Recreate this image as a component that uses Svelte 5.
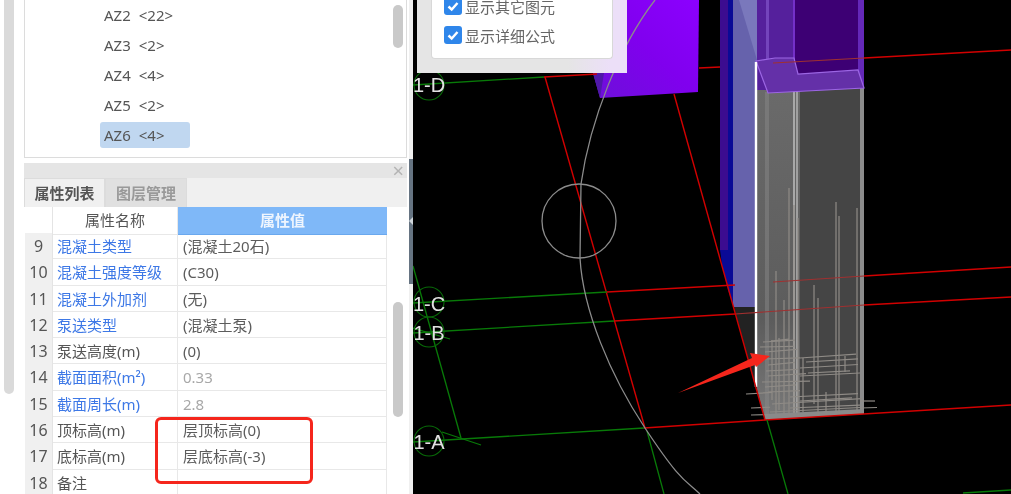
<script lang="ts">
  const members = [
    { name: 'AZ2', count: 22 },
    { name: 'AZ3', count: 2 },
    { name: 'AZ4', count: 4 },
    { name: 'AZ5', count: 2 },
    { name: 'AZ6', count: 4, selected: true }
  ];

  const props = [
    { no: 9, name: '混凝土类型', value: '(混凝土20石)', link: true },
    { no: 10, name: '混凝土强度等级', value: '(C30)', link: true },
    { no: 11, name: '混凝土外加剂', value: '(无)', link: true },
    { no: 12, name: '泵送类型', value: '(混凝土泵)', link: true },
    { no: 13, name: '泵送高度(m)', value: '(0)' },
    { no: 14, name: '截面面积(m²)', value: '0.33', link: true, muted: true },
    { no: 15, name: '截面周长(m)', value: '2.8', link: true, muted: true },
    { no: 16, name: '顶标高(m)', value: '层顶标高(0)' },
    { no: 17, name: '底标高(m)', value: '层底标高(-3)' },
    { no: 18, name: '备注', value: '' }
  ];

  // axis bubbles on the drawing
  const axes = [
    { label: '1-D', cy: 85, base: 92 },
    { label: '1-C', cy: 302, base: 311 },
    { label: '1-B', cy: 332, base: 340 },
    { label: '1-A', cy: 441, base: 449 }
  ];

  const greens = [
    [413, 85, 544, 77],
    [413, 303, 607, 292],
    [413, 333, 614, 321],
    [413, 442, 644, 428],
    [413, 266, 461, 438],
    [442, 432, 481, 445],
    [413, 328, 450, 339],
    [767, 420, 788, 494],
    [647, 431, 664, 494],
    [963, 493, 1011, 490]
  ];

  const reds = [
    [544, 77, 597, 74],
    [699, 68, 720, 67],
    [864, 58, 1011, 50],
    [607, 292, 735, 285],
    [864, 276, 1011, 267],
    [614, 321, 735, 314],
    [864, 305, 1011, 297],
    [644, 428, 765, 420],
    [765, 420, 1011, 405],
    [545, 77, 645, 428],
    [674, 94, 765, 420]
  ];

  const dimReds = [
    [773, 63, 864, 58],
    [773, 282, 864, 276],
    [735, 314, 864, 305]
  ];

  // vertical bars: x, top, bottom
  const bars = [
    [776, 271, 414], [784, 300, 414], [789, 188, 416], [794, 205, 416], [798, 218, 416],
    [814, 285, 404], [818, 298, 416], [836, 202, 416], [839, 216, 416], [857, 208, 414],
    [772, 340, 400], [779, 338, 410], [803, 358, 412], [826, 392, 416], [845, 356, 372]
  ];

  // stirrups and stubs: x1, y, x2, tilt
  const ties = [
    [763, 342, 795, 0.06], [760, 347, 794, 0.02], [771, 341, 789, 0.1], [765, 352, 797, 0.08],
    [764, 359, 800, 0.03], [768, 365, 795, 0.1], [766, 371, 798, 0.05], [768, 376, 806, 0.06],
    [762, 382, 810, 0.02], [765, 387, 796, 0.07], [768, 392, 800, 0.04],
    [800, 358, 856, 0.07], [806, 362, 858, 0.06], [800, 368, 858, 0.06], [808, 373, 850, 0.05],
    [800, 376, 860, 0.05], [790, 397, 858, 0.05], [800, 401, 852, 0.06], [772, 404, 862, 0.06],
    [790, 408, 860, 0.04], [770, 412, 860, 0.05], [746, 394, 772, 0.06], [751, 408, 770, 0.04],
    [751, 415, 768, 0.02], [860, 401, 875, 0], [860, 408, 877, 0.03]
  ];
</script>

<div class="page">
  <aside class="sidebar">
    <div class="gutter"><div class="gutter-thumb"></div></div>

    <div class="panels">
      <section class="list-panel">
        <ul class="members">
          {#each members as m}
            <li class:selected={m.selected}><span>{m.name}</span><span>&lt;{m.count}&gt;</span></li>
          {/each}
        </ul>
        <div class="list-thumb"></div>
      </section>

      <section class="props-panel">
        <header class="props-title"><span class="close">×</span></header>
        <div class="tabs">
          <div class="tab active">属性列表</div>
          <div class="tab">图层管理</div>
        </div>
        <div class="props-body">
          <div class="table">
            <div class="row head">
              <div class="no"></div>
              <div class="name">属性名称</div>
              <div class="value">属性值</div>
            </div>
            {#each props as p}
              <div class="row">
                <div class="no">{p.no}</div>
                <div class="name" class:link={p.link}>{p.name}</div>
                <div class="value" class:muted={p.muted}>{p.value}</div>
              </div>
            {/each}
          </div>
          <div class="table-thumb"></div>
        </div>
      </section>
    </div>

    <div class="splitter">
      <div class="grip"><span class="grip-arrow"></span></div>
    </div>

    <div class="callout"></div>
  </aside>

  <main class="canvas">
    <svg class="drawing" viewBox="413 0 598 494" width="598" height="494">
      <defs>
        <linearGradient id="block" x1="0" y1="1" x2="1" y2="0">
          <stop offset="0" stop-color="#6c10d8" />
          <stop offset="0.5" stop-color="#8000ee" />
          <stop offset="1" stop-color="#8c00ff" />
        </linearGradient>
        <linearGradient id="shaft" x1="0" y1="0" x2="0" y2="1">
          <stop offset="0" stop-color="#6a6a6a" />
          <stop offset="0.7" stop-color="#5c5c5c" />
          <stop offset="1" stop-color="#7a7a7a" />
        </linearGradient>
      </defs>

      <!-- purple block behind the panel -->
      <polygon points="593,73 600,98 698,92 699,0 600,0" fill="url(#block)" />
      <polygon points="593,73 600,98 604,73" fill="#4f18a8" />

      <!-- tall wall -->
      <rect x="720" y="0" width="8" height="250" fill="#3c0c90" />
      <polygon points="728,0 733,0 733,305 728,290 722,265 720,250 728,250" fill="#0a0a96" />
      <polygon points="733,0 757,0 757,307 733,307" fill="#6662ac" />
      <polygon points="739,0 757,0 757,60" fill="#7a78bc" />
      <polygon points="734,307 757,307 757,390 756,390" fill="#222" />

      <!-- upper column -->
      <rect x="757" y="0" width="38" height="92" fill="#55209c" />
      <rect x="795" y="0" width="69" height="90" fill="#3d0074" />
      <rect x="766" y="0" width="3" height="92" fill="#7444bc" />
      <rect x="793" y="0" width="2" height="90" fill="#7430c8" />
      <rect x="858" y="0" width="6" height="88" fill="#6428b8" />

      <!-- lower column -->
      <polygon points="757,90 800,90 800,416 765,420 757,390" fill="url(#shaft)" />
      <polygon points="800,90 864,88 864,414 800,417" fill="#454545" />
      <rect x="765" y="92" width="4" height="328" fill="#888" opacity="0.5" />
      <rect x="793" y="90" width="2" height="326" fill="#a8a8a8" />
      <rect x="796" y="90" width="2" height="326" fill="#a0a0a0" />
      <rect x="860" y="88" width="4" height="326" fill="#8c8c8c" />
      <polygon points="765,420 864,414 864,409 765,414" fill="#8a8a8a" />

      <!-- cap of the column -->
      <polygon
        points="756,61 775,58 794,58 798,74 858,70 864,88 768,93"
        fill="#6430a8"
        stroke="#9c66e4"
        stroke-width="1.2"
      />

      <line x1="756" y1="62" x2="756" y2="387" stroke="#fff" stroke-width="2.4" />

      {#each bars as [x, top, bottom]}
        <line x1={x} y1={top} x2={x} y2={bottom} class="rebar" />
      {/each}
      {#each ties as [x1, y, x2, tilt]}
        <line {x1} y1={y} {x2} y2={y - (x2 - x1) * tilt} class="rebar" />
      {/each}

      {#each dimReds as [x1, y1, x2, y2]}
        <line {x1} {y1} {x2} {y2} class="red dim" />
      {/each}
      {#each reds as [x1, y1, x2, y2]}
        <line {x1} {y1} {x2} {y2} class="red" />
      {/each}
      {#each greens as [x1, y1, x2, y2]}
        <line {x1} {y1} {x2} {y2} class="green" />
      {/each}

      <!-- big arc and small circle -->
      <path class="arc" d="M655 0C620 45 590 120 581 184L580 258C583 310 610 375 645 428S685 480 700 494" />
      <circle class="arc" cx="579" cy="221" r="37" />

      {#each axes as a}
        <circle class="bubble" cx="429" cy={a.cy} r="15" />
        <text class="axis" x="429" y={a.base}>{a.label}</text>
      {/each}

      <!-- red arrow -->
      <polygon points="678,393 752,358 750,353 770,356 756,367 755,365" fill="#f5261c" />
    </svg>

    <div class="options">
      <div class="options-card">
        <label class="check">
          <span class="box"><svg viewBox="0 0 18 18" width="18" height="18"><path d="M4.5 9.5l3.2 3 5.8-6.5" /></svg></span>
          显示其它图元
        </label>
        <label class="check">
          <span class="box"><svg viewBox="0 0 18 18" width="18" height="18"><path d="M4.5 9.5l3.2 3 5.8-6.5" /></svg></span>
          显示详细公式
        </label>
      </div>
    </div>
  </main>
</div>

<style>
  :global(body) {
    margin: 0;
    background: #000;
  }

  .page {
    display: flex;
    width: 1011px;
    height: 494px;
    overflow: hidden;
    font-family: 'Noto Sans', 'Noto Sans CJK SC', sans-serif;
    font-size: 15px;
    filter: blur(0.35px);
  }

  .sidebar {
    position: relative;
    display: flex;
    flex: 0 0 413px;
    background: #fff;
  }

  .gutter {
    flex: 0 0 10px;
    margin: 0 10px 0 4px;
  }

  .gutter-thumb {
    height: 394px;
    background: #dadada;
    border-radius: 0 0 5px 5px;
  }

  .panels {
    flex: 0 0 383px;
    display: flex;
    flex-direction: column;
    gap: 5px;
    min-height: 0;
  }

  .splitter {
    margin-left: 2px;
    flex: 0 0 4px;
    padding-top: 159px;
    background: #f0f0f0;
  }

  .grip {
    position: relative;
    height: 125px;
    background: #667482;
  }

  .grip-arrow {
    position: absolute;
    top: 58px;
    left: 0;
    border: 4px solid transparent;
    border-left: 0;
    border-right: 4px solid #cfd5da;
  }

  /* member list */
  .list-panel {
    position: relative;
    flex: 0 0 158px;
    box-sizing: border-box;
    background: #fff;
    border: 1px solid #dcdcdc;
    border-top: 0;
  }

  .members {
    list-style: none;
    margin: 0;
    padding: 0 0 0 75px;
    color: #555;
  }

  .members li {
    display: flex;
    align-items: center;
    gap: 8px;
    box-sizing: border-box;
    width: 90px;
    height: 30px;
    padding-left: 4px;
  }

  .members li.selected {
    height: 26px;
    margin-top: 2px;
    background: #c0d7f0;
    border-radius: 3px;
  }

  .list-thumb {
    position: absolute;
    top: 5px;
    right: 3px;
    width: 10px;
    height: 43px;
    background: #c9c9c9;
    border-radius: 5px;
  }

  /* property grid */
  .props-panel {
    flex: 1;
    min-height: 0;
    display: flex;
    flex-direction: column;
  }

  .props-title {
    display: flex;
    align-items: center;
    justify-content: flex-end;
    flex: 0 0 15px;
    padding-right: 3px;
    background: #e5e5e5;
  }

  .close {
    font-size: 20px;
    line-height: 15px;
    color: #b4b4b4;
  }

  .tabs {
    display: flex;
    flex: 0 0 29px;
    background: #f0f0f0;
  }

  .tab {
    box-sizing: border-box;
    width: 82px;
    padding-top: 3px;
    text-align: center;
    font-weight: 700;
    color: #999;
    background: #e0e0e0;
    border: 1px solid #dcdcdc;
    border-bottom: 0;
  }

  .tab.active {
    width: 81px;
    color: #555;
    background: #f0f0f0;
    border-right: 1px solid #dcdcdc;
  }

  .props-body {
    position: relative;
    flex: 1;
    min-height: 0;
    background: #fff;
  }

  .table {
    width: 362px;
    margin-left: 1px;
  }

  .row {
    display: grid;
    grid-template-columns: 28px 125px 1fr;
    box-sizing: border-box;
    height: 26.3px;
    line-height: 27px;
    border-bottom: 1.5px solid #e8e8e8;
    border-right: 1.5px solid #e8e8e8;
    color: #555;
  }

  .row.head {
    height: 26px;
    border-right: 0;
    border-bottom: 0;
  }

  .no {
    text-align: center;
    background: #f0f0f0;
    border-right: 1.5px solid #e4e4e4;
    color: #555;
    font-size: 16px;
  }

  .head .no {
    background: #fff;
  }

  .name {
    padding-left: 4px;
    white-space: nowrap;
    border-right: 1.5px solid #e8e8e8;
  }

  .head .name {
    padding-left: 0;
    text-align: center;
    border-bottom: 1.5px solid #e8e8e8;
  }

  .link {
    color: #3d78e6;
  }

  .value {
    padding-left: 5px;
    white-space: nowrap;
    color: #5c5c5c;
  }

  .value.muted {
    color: #a8a8a8;
  }

  .head .value {
    padding-left: 0;
    text-align: center;
    font-weight: 700;
    color: #eef5fe;
    background: #7fb8f8;
    border-bottom: 1.5px solid #6aa8ee;
  }

  .table-thumb {
    position: absolute;
    top: 95px;
    right: 4px;
    width: 10px;
    height: 115px;
    background: #c9c9c9;
    border-radius: 5px;
  }

  .callout {
    position: absolute;
    left: 155px;
    top: 417px;
    width: 158px;
    height: 67px;
    box-sizing: border-box;
    border: 3px solid #f5261c;
    border-radius: 6px;
  }

  /* drawing area */
  .canvas {
    position: relative;
    flex: 1;
    background: #000;
  }

  .drawing {
    display: block;
  }

  .green {
    stroke: #087a08;
    stroke-width: 1.3;
  }

  .red {
    stroke: #d20000;
    stroke-width: 1.4;
  }

  .red.dim {
    stroke: #a03030;
    stroke-width: 1.1;
  }

  .rebar {
    stroke: #8f8b86;
    stroke-width: 1.2;
  }

  .arc {
    fill: none;
    stroke: #8c8c8c;
    stroke-width: 1.3;
  }

  .bubble {
    fill: none;
    stroke: #086a08;
    stroke-width: 1.1;
  }

  .axis {
    font-family: 'Liberation Sans', sans-serif;
    font-size: 20px;
    text-anchor: middle;
    fill: #e2e2e2;
  }

  .options {
    position: absolute;
    left: 4px;
    top: 0;
    box-sizing: border-box;
    width: 210px;
    height: 73px;
    padding: 0 14px 14px;
    background: linear-gradient(90deg, #e5e5e5 0, #e5e5e5 72%, #ecdff8 92%);
  }

  .options-card {
    display: flex;
    flex-direction: column;
    justify-content: flex-end;
    gap: 11px;
    box-sizing: border-box;
    height: 59px;
    padding: 0 0 14px 12px;
    background: #fff;
    border: 1px solid #d8d8d8;
    border-top: 0;
    border-radius: 0 0 4px 4px;
  }

  .check {
    display: flex;
    align-items: center;
    gap: 3px;
    height: 18px;
    color: #666;
    white-space: nowrap;
  }

  .box {
    display: block;
    width: 18px;
    height: 18px;
    background: #2f86ea;
    border-radius: 3px;
  }

  .box svg {
    display: block;
  }

  .box path {
    fill: none;
    stroke: #fff;
    stroke-width: 2.4;
  }
</style>
